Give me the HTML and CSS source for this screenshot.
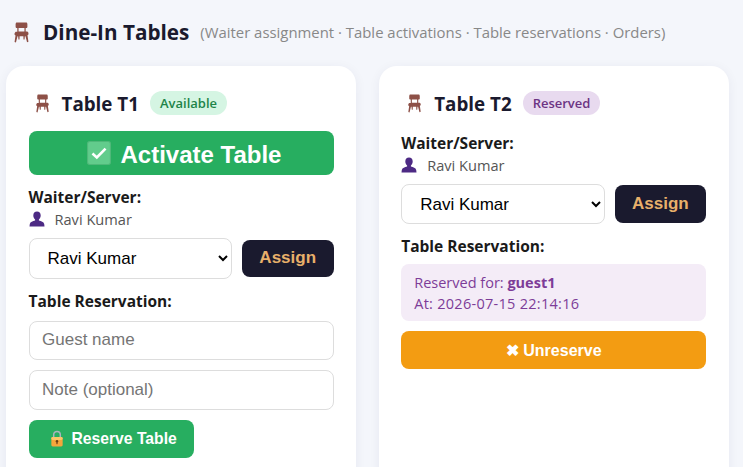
FILE: index.html
```html
<!DOCTYPE html>
<html lang="en">

<head>
    <meta charset="UTF-8">
    <meta name="viewport" content="width=device-width, initial-scale=1.0">
    <title>Dine-In Tables</title>
    <link rel="stylesheet" href="styles.css">
</head>

<body>
    <svg class="defs" width="0" height="0">
        <symbol id="chair" viewBox="0 0 16 20">
            <path fill="#8d5047" d="M3 .5h10l.6 1.200v3.200l-.6.8H12v3.400h1.600l1 1.200v1.600l-.9.6.9 6.300-1.300.4-1.500-5.700h-.6l-.3 3.200h-1l-.1-3.200H6.200l-.1 3.200h-1l-.3-3.200h-.6L2.700 19.500l-1.300-.4.9-6.300-.9-.6v-1.600l1-1.200H4V5.700H3l-.6-.8V1.700zM5.200 5.700v3.400h5.600V5.700z"/>
        </symbol>
        <symbol id="bust" viewBox="0 0 16 16">
            <path fill="#4d2a84" d="M8 .5c2.300 0 3.700 1.700 3.700 3.900 0 1.700-.8 3.200-1.800 4v1.200c2.200.6 4.900 1.500 5.300 3.300l.3 2.600H.5l.3-2.600c.4-1.800 3.100-2.700 5.300-3.300V8.400c-1-.8-1.800-2.300-1.800-4C4.300 2.200 5.700.5 8 .5z"/>
        </symbol>
    </svg>

    <h1 class="page-title">
        <svg class="chair chair-lg"><use href="#chair"></use></svg>
        <span>Dine-In Tables</span>
        <small>(Waiter assignment · Table activations · Table reservations · Orders)</small>
    </h1>

    <div class="table-grid">
        <div class="card">
            <div class="card-head">
                <svg class="chair"><use href="#chair"></use></svg>
                <h2>Table T1</h2>
                <span class="badge badge-free">Available</span>
            </div>
            <button class="btn btn-activate">
                <svg class="check" viewBox="0 0 22 22">
                    <rect x="0.500" y="0.500" width="21" height="21" rx="2" fill="#62cc8c" stroke="#4fb879"/>
                    <path d="M5 11.500l4 3.500 8-8" fill="none" stroke="#fff" stroke-width="2.400"/>
                </svg>
                <span class="btn-text">Activate Table</span>
            </button>
            <div class="label">Waiter/Server:</div>
            <div class="waiter"><svg class="bust"><use href="#bust"></use></svg>Ravi Kumar</div>
            <div class="assign-row">
                <select class="select"><option>Ravi Kumar</option></select>
                <button class="btn btn-assign">Assign</button>
            </div>
            <div class="label label-res">Table Reservation:</div>
            <input class="input" type="text" placeholder="Guest name">
            <input class="input" type="text" placeholder="Note (optional)">
            <button class="btn btn-reserve">
                <svg class="lock" viewBox="0 0 14 18">
                    <path d="M3.500 8V5a3.500 3.500 0 0 1 7 0v3" fill="none" stroke="#a9b4bd" stroke-width="1.600"/>
                    <rect x="1" y="7.500" width="12" height="10" rx="1.500" fill="#f5a63c"/>
                    <rect x="1" y="7.500" width="12" height="3" rx="1.500" fill="#fbc768"/>
                    <circle cx="7" cy="12" r="1.300" fill="#6b3d12"/>
                    <rect x="6.400" y="12" width="1.200" height="3" fill="#6b3d12"/>
                </svg>
                Reserve Table
            </button>
        </div>

        <div class="card">
            <div class="card-head">
                <svg class="chair"><use href="#chair"></use></svg>
                <h2>Table T2</h2>
                <span class="badge badge-reserved">Reserved</span>
            </div>
            <div class="label">Waiter/Server:</div>
            <div class="waiter"><svg class="bust"><use href="#bust"></use></svg>Ravi Kumar</div>
            <div class="assign-row">
                <select class="select"><option>Ravi Kumar</option></select>
                <button class="btn btn-assign">Assign</button>
            </div>
            <div class="label label-res">Table Reservation:</div>
            <div class="reserved-box">
                Reserved for: <b>guest1</b><br>
                <span class="reserved-at">At: 2026-07-15 22:14:16</span>
            </div>
            <button class="btn btn-unreserve">✖ Unreserve</button>
        </div>
    </div>
</body>

</html>
```

FILE: styles.css
```css
html {
    height: 100%;
    overflow: hidden;
}

body {
    margin: 0;
    padding: 18px 14px 0 6px;
    background: #f4f6fb;
    font-family: "Open Sans", "Noto Sans", sans-serif;
    color: #1a1a2e;
}

.defs {
    display: block;
}

.page-title {
    display: flex;
    align-items: center;
    height: 28px;
    margin: 0 0 20px 7px;
    font-size: 20.700px;
    font-weight: 700;
    white-space: nowrap;
}

.page-title small {
    margin-left: 11px;
    font-size: 14.900px;
    font-weight: 400;
    color: #888;
}

.chair {
    width: 15px;
    height: 19px;
    flex: none;
    margin-right: 12px;
}

.chair-lg {
    width: 17px;
    height: 21px;
    margin-right: 13px;
}

.table-grid {
    display: grid;
    grid-template-columns: 350px 350px;
    gap: 22.700px;
}

.card {
    display: flex;
    flex-direction: column;
    align-items: flex-start;
    min-height: 415px;
    padding: 23px 22.500px;
    background: #fff;
    border-radius: 18px;
    box-shadow: 0 2px 12px rgba(30, 40, 80, 0.06);
}

.card-head {
    display: flex;
    align-items: center;
    height: 26px;
    margin: 1px 0 15px 6px;
}

.card-head h2 {
    margin: 0 11px 0 0;
    padding-top: 2px;
    font-size: 18.800px;
    font-weight: 700;
    color: #1a1a2e;
}

.badge {
    padding: 0 10px;
    height: 24px;
    line-height: 24px;
    border-radius: 12px;
    font-size: 13px;
    font-weight: 600;
}

.badge-free {
    background: #d5f5e3;
    color: #1e8449;
}

.badge-reserved {
    background: #e8daef;
    color: #6c3483;
}

.btn {
    border: 0;
    border-radius: 8px;
    font-family: "Liberation Sans", Arial, sans-serif;
    font-weight: 700;
    color: #fff;
}

.btn-activate {
    display: flex;
    align-items: center;
    justify-content: center;
    gap: 10px;
    width: 305px;
    height: 44px;
    margin-bottom: 10.300px;
    padding-left: 12px;
    background: #27ae60;
    font-size: 24px;
}

.btn-text {
    padding-top: 3px;
}

.check {
    width: 24px;
    height: 24px;
}

.label {
    margin-top: 2px;
    font-size: 15.500px;
    font-weight: 700;
    line-height: 21px;
    color: #1a1a1a;
}

.label-res {
    margin-top: 0;
    margin-bottom: 9px;
}

.waiter {
    display: flex;
    align-items: center;
    height: 21px;
    margin-bottom: 9px;
    font-size: 14.600px;
    color: #555;
}

.bust {
    width: 16px;
    height: 16px;
    margin-right: 10px;
}

.assign-row {
    display: flex;
    align-items: center;
    gap: 10px;
    width: 305px;
    margin-bottom: 12px;
}

.select {
    flex: 1;
    min-width: 0;
    height: 40.300px;
    padding: 0 14px;
    background: #fff;
    border: 1px solid #ddd;
    border-radius: 8px;
    font-family: "Liberation Sans", Arial, sans-serif;
    font-size: 17px;
    color: #000;
}

.btn-assign {
    width: 91.600px;
    height: 37.500px;
    background: #1a1a2e;
    color: #e8b06a;
    font-size: 17px;
}

.input {
    box-sizing: border-box;
    width: 305px;
    height: 39.500px;
    margin-bottom: 10px;
    padding: 0 12.500px;
    border: 1px solid #ddd;
    border-radius: 8px;
    font-family: "Liberation Sans", Arial, sans-serif;
    font-size: 17px;
}

.input::placeholder {
    color: #757575;
}

.btn-reserve {
    display: flex;
    align-items: center;
    gap: 8px;
    height: 38px;
    padding: 0 17px 0 21px;
    background: #27ae60;
    font-size: 15.700px;
}

.lock {
    width: 14px;
    height: 17px;
}

.reserved-box {
    box-sizing: border-box;
    width: 305px;
    height: 57px;
    margin-top: -2.300px;
    margin-bottom: 10px;
    padding: 8px 13px;
    background: #f4ecf7;
    border-radius: 8px;
    font-size: 14.500px;
    line-height: 21px;
    color: #7d3c98;
}

.reserved-at {
    letter-spacing: 0.280px;
}

.btn-unreserve {
    width: 305px;
    height: 38px;
    background: #f39c12;
    font-size: 16px;
}
```
